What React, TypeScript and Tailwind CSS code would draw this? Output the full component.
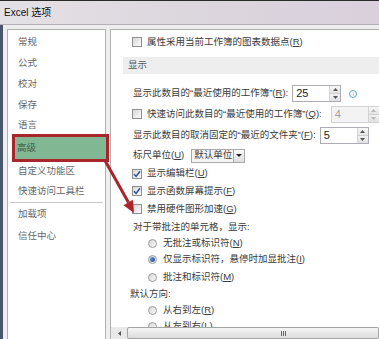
const Checkbox = ({ checked }: { checked?: boolean }) => (
  <span className="flex h-[10px] w-[10px] shrink-0 items-center justify-center border border-[#8e8f8f] bg-linear-to-br from-[#d8d8d8] to-[#fafafa]">
    {checked && (
      <svg viewBox="0 0 8 8" className="h-[8px] w-[8px]">
        <path d="M1 4.2 L3.1 6.4 L7 1.2" stroke="#2c4f9c" strokeWidth="1.5" fill="none" />
      </svg>
    )}
  </span>
);

const Radio = ({ checked }: { checked?: boolean }) => (
  <span className="flex h-[9px] w-[9px] shrink-0 items-center justify-center rounded-full border border-[#9a9a9a] bg-linear-to-br from-[#d6d6d6] to-[#fbfbfb]">
    {checked && <span className="h-[5px] w-[5px] rounded-full bg-linear-to-br from-[#6d9be0] to-[#1d4a93]" />}
  </span>
);

const Key = ({ k }: { k: string }) => (
  <span>
    (<span className="underline">{k}</span>)
  </span>
);

const Spin = ({ value, disabled }: { value: string; disabled?: boolean }) => (
  <div className={"ml-[4px] flex h-[17px] shrink-0 border " + (disabled ? "border-[#d2d2d2] bg-[#f3f3f3]" : "border-[#abadb3] bg-white")}>
    <div className={"w-[36px] pl-[3px] text-[11px] leading-[15px] " + (disabled ? "text-[#a0a0a0]" : "text-[#222]")}>{value}</div>
    <div className="flex w-[11px] flex-col border-l border-[#d4d4d4]">
      <div className="flex flex-1 items-center justify-center border-b border-[#d0d0d0] bg-linear-to-b from-[#f7f7f7] to-[#e4e4e4]">
        <svg viewBox="0 0 5 3" className="h-[3px] w-[5px]">
          <path d="M0 3 L2.5 0 L5 3Z" fill={disabled ? "#b8b8b8" : "#555"} />
        </svg>
      </div>
      <div className="flex flex-1 items-center justify-center bg-linear-to-b from-[#f2f2f2] to-[#e0e0e0]">
        <svg viewBox="0 0 5 3" className="h-[3px] w-[5px]">
          <path d="M0 0 L2.5 3 L5 0Z" fill={disabled ? "#b8b8b8" : "#555"} />
        </svg>
      </div>
    </div>
  </div>
);

const leftItems = ["常规", "公式", "校对", "保存"];

export default function App() {
  return (
    <div className="relative h-[339px] w-[379px] overflow-hidden bg-[#eeeeee] font-['Liberation_Sans','Noto_Sans_CJK_SC',sans-serif] text-[9.5px]">
      {/* title bar */}
      <div className="flex h-[25px] items-center border-t border-b border-t-[#2a2a2a] border-b-[#b4b0b6] bg-linear-to-r from-[#e4e1e6] via-[#dcd6dd] to-[#d9d0dc] pl-[4px] text-[10px] text-[#111]">
        Excel 选项
      </div>

      <div className="flex h-[314px] border-l-[3px] border-[#4a566a] pl-[4px] pt-[4px]">
        {/* left nav */}
        <div className="w-[99px] shrink-0 border-t border-l border-r border-[#b0b0b0] bg-white pt-[2px] text-[#666]">
          {leftItems.map((t) => (
            <div key={t} className="flex h-[21px] items-center pl-[10px]">
              {t}
            </div>
          ))}
          <div className="flex h-[19px] items-center pl-[10px]">语言</div>
          <div className="relative z-10 -mr-[4px] -mt-[1px] ml-[4px] flex h-[28px] items-center border-[3px] border-[#a8262b] bg-[#82b794] pl-[2px] text-[#44604d]">
            高级
          </div>
          <div className="flex h-[19px] items-center pl-[10px]">自定义功能区</div>
          <div className="flex h-[21px] items-center pl-[10px]">快速访问工具栏</div>
          <div className="mx-[2px] h-px bg-[#c8c8c8]" />
          <div className="flex h-[22px] items-center pl-[10px]">加载项</div>
          <div className="flex h-[22px] items-center pl-[10px]">信任中心</div>
        </div>

        {/* right content */}
        <div className="ml-[4px] flex flex-1 flex-col overflow-hidden border-t border-l border-[#b0b0b0] bg-white">
          <div className="flex-1 overflow-hidden text-[#3a3a3a]">
            <div className="mt-[3px] flex h-[18px] items-center gap-[5px] pl-[21px]">
              <Checkbox />
              <span className="whitespace-nowrap">
                属性采用当前工作簿的图表数据点<Key k="R" />
              </span>
            </div>
            <div className="ml-[12px] mt-[6px] flex h-[17px] items-center bg-[#eeeeee] pl-[5px] text-[#555]">显示</div>

            <div className="mt-[10px] flex h-[19px] items-center pl-[22px]">
              <span className="whitespace-nowrap">显示此数目的“最近使用的工作簿”<Key k="R" />:</span>
              <Spin value="25" />
              <span className="ml-[8px] flex h-[8px] w-[8px] items-center justify-center rounded-full border border-[#5aa0c8] text-[6px] leading-none text-[#4a90c0]">
                i
              </span>
            </div>
            <div className="flex h-[22px] items-center gap-[5px] pl-[21px]">
              <Checkbox />
              <span className="whitespace-nowrap">快速访问此数目的“最近使用的工作簿”<Key k="Q" />:</span>
              <Spin value="4" disabled />
            </div>
            <div className="flex h-[21px] items-center pl-[22px]">
              <span className="whitespace-nowrap">显示此数目的取消固定的“最近的文件夹”<Key k="F" />:</span>
              <Spin value="5" />
            </div>
            <div className="flex h-[19px] items-center pl-[22px]">
              <span className="whitespace-nowrap">
                标尺单位<Key k="U" />
              </span>
              <div className="ml-[7px] flex h-[14px] items-center border border-[#a8a8a8] bg-[#f4f4f4] pl-[2px]">
                <span className="w-[39px] whitespace-nowrap">默认单位</span>
                <span className="flex h-[12px] w-[11px] items-center justify-center border-l border-[#a8a8a8] bg-linear-to-b from-[#fafafa] to-[#dedede]">
                  <svg viewBox="0 0 6 3" className="h-[3px] w-[6px]">
                    <path d="M0 0 L3 3 L6 0Z" fill="#222" />
                  </svg>
                </span>
              </div>
            </div>
            <div className="flex h-[17px] items-center gap-[5px] pl-[21px]">
              <Checkbox checked />
              <span>
                显示编辑栏<Key k="U" />
              </span>
            </div>
            <div className="flex h-[18px] items-center gap-[5px] pl-[21px]">
              <Checkbox checked />
              <span>
                显示函数屏幕提示<Key k="F" />
              </span>
            </div>
            <div className="flex h-[18px] items-center gap-[5px] pl-[21px]">
              <Checkbox />
              <span>
                禁用硬件图形加速<Key k="G" />
              </span>
            </div>
            <div className="flex h-[18px] items-center pl-[22px]">对于带批注的单元格，显示:</div>
            <div className="flex h-[15px] items-center gap-[6px] pl-[37px]">
              <Radio />
              <span>
                无批注或标识符<Key k="N" />
              </span>
            </div>
            <div className="flex h-[17px] items-center gap-[6px] pl-[37px]">
              <Radio checked />
              <span className="whitespace-nowrap">
                仅显示标识符，悬停时加显批注<Key k="I" />
              </span>
            </div>
            <div className="flex h-[18px] items-center gap-[6px] pl-[37px]">
              <Radio />
              <span>
                批注和标识符<Key k="M" />
              </span>
            </div>
            <div className="flex h-[17px] items-center pl-[19px]">默认方向:</div>
            <div className="flex h-[14px] items-center gap-[6px] pl-[37px]">
              <Radio />
              <span>
                从右到左<Key k="R" />
              </span>
            </div>
            <div className="flex h-[18px] items-center gap-[6px] pl-[37px]">
              <Radio />
              <span>
                从左到右<Key k="L" />
              </span>
            </div>
          </div>

          {/* horizontal scrollbar */}
          <div className="flex h-[12px] shrink-0 bg-[#e9e9e9]">
            <div className="flex w-[16px] items-center justify-center">
              <svg viewBox="0 0 3 5" className="h-[5px] w-[3px]">
                <path d="M3 0 L0 2.5 L3 5Z" fill="#555" />
              </svg>
            </div>
            <div className="flex flex-1 items-center justify-center rounded-[2px] border border-[#a4a4a4] bg-linear-to-b from-[#f6f6f6] to-[#dcdcdc] pl-[60px]">
              <div className="flex gap-[1px]">
                <span className="h-[5px] w-px bg-[#666]" />
                <span className="h-[5px] w-px bg-[#666]" />
                <span className="h-[5px] w-px bg-[#666]" />
              </div>
            </div>
          </div>
        </div>
      </div>

      {/* red annotation arrow */}
      <svg className="pointer-events-none absolute left-0 top-0" width="379" height="339" viewBox="0 0 379 339">
        <line x1="103" y1="157" x2="128.5" y2="202.5" stroke="#a8262b" strokeWidth="3" />
        <path d="M134 213 L123.5 205.2 L133 199.8Z" fill="#a8262b" />
      </svg>
    </div>
  );
}
